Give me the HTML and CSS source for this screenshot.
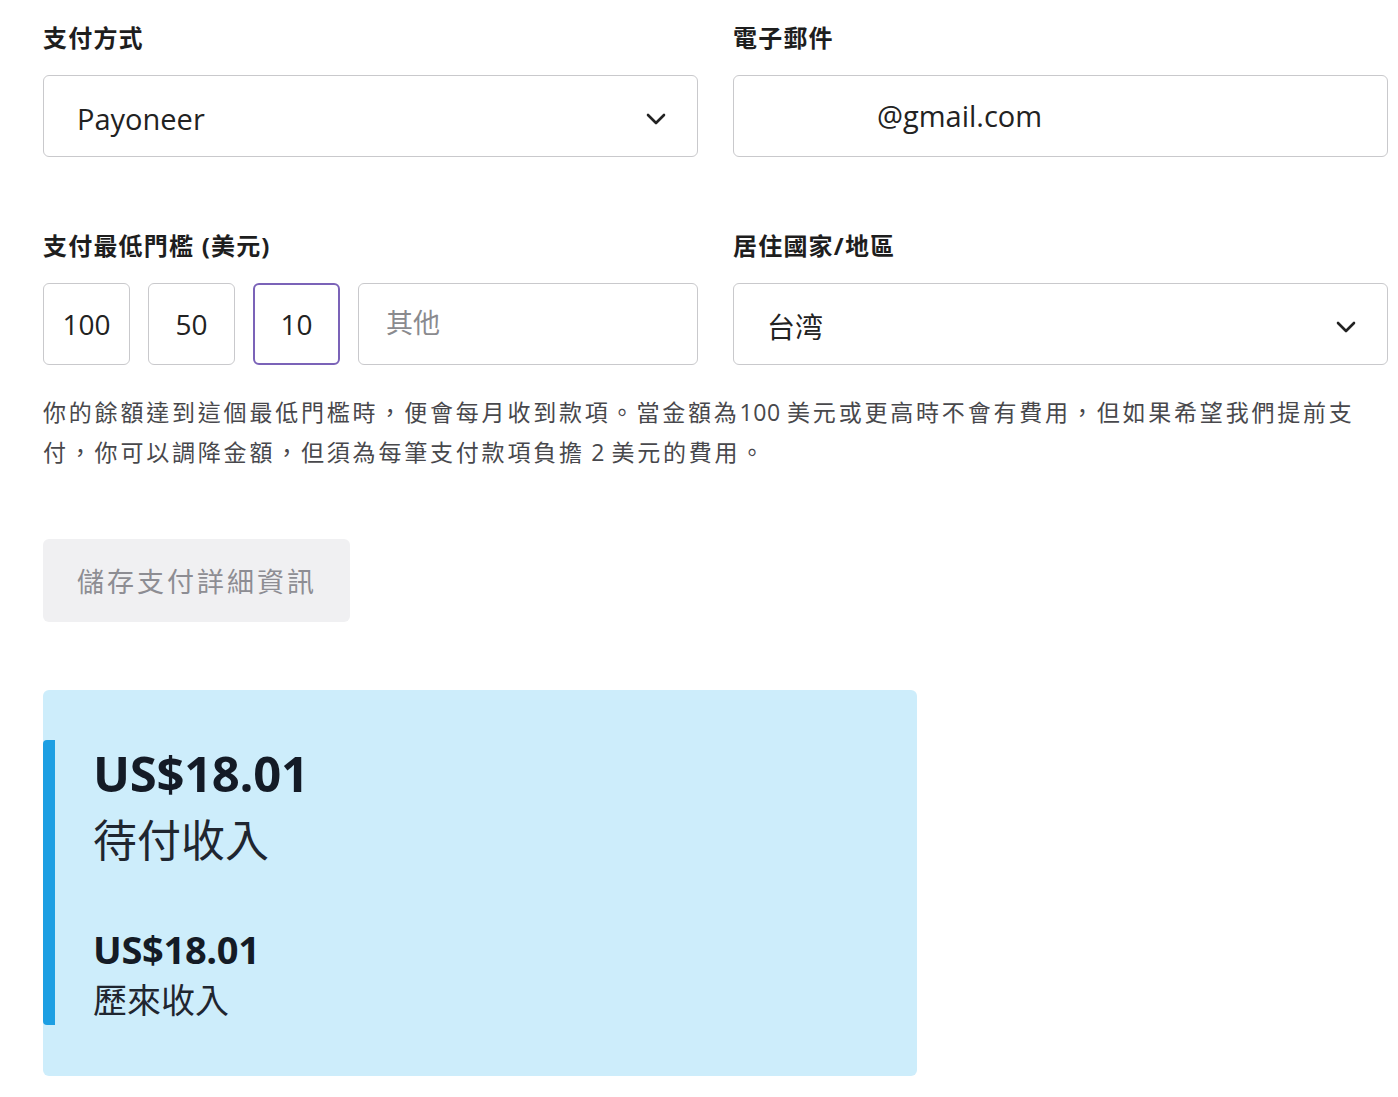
FILE: index.html
```html
<!DOCTYPE html>
<html lang="zh-Hant">
<head>
<meta charset="utf-8">
<title>支付詳細資訊</title>
<link rel="stylesheet" href="styles.css">
</head>
<body>
<div class="page">
  <div class="grid">
    <div class="field">
      <div class="label">支付方式</div>
      <div class="box select">
        <span>Payoneer</span>
        <svg class="chev" width="22" height="14" viewBox="0 0 22 14"><path d="M3 3 L11 11 L19 3" fill="none" stroke="#222" stroke-width="2.6" stroke-linecap="round" stroke-linejoin="round"/></svg>
      </div>
    </div>
    <div class="field">
      <div class="label">電子郵件</div>
      <div class="box email"><span>@gmail.com</span></div>
    </div>

    <div class="field row2">
      <div class="label">支付最低門檻 (美元)</div>
      <div class="amounts">
        <div class="box opt">100</div>
        <div class="box opt">50</div>
        <div class="box opt active">10</div>
        <div class="box other">其他</div>
      </div>
    </div>
    <div class="field row2">
      <div class="label">居住國家/地區</div>
      <div class="box select">
        <span class="cjk">台湾</span>
        <svg class="chev" width="22" height="14" viewBox="0 0 22 14"><path d="M3 3 L11 11 L19 3" fill="none" stroke="#222" stroke-width="2.6" stroke-linecap="round" stroke-linejoin="round"/></svg>
      </div>
    </div>
  </div>

  <p class="help">你的餘額達到這個最低門檻時，便會每月收到款項。當金額為<span class="num">100 </span>美元或更高時不會有費用，但如果希望我們提前支付，你可以調降金額，但須為每筆支付款項負擔<span class="num"> 2 </span>美元的費用。</p>

  <div class="save">儲存支付詳細資訊</div>

  <div class="card">
    <div class="card-inner">
      <div class="big-amt">US$18.01</div>
      <div class="big-lbl">待付收入</div>
      <div class="sm-amt">US$18.01</div>
      <div class="sm-lbl">歷來收入</div>
    </div>
  </div>
</div>
</body>
</html>
```

FILE: styles.css
```css
body{margin:0; background:#fff; color:#222;
font-family:"Open Sans","Noto Sans CJK TC",sans-serif;}
.page{padding:24px 10px 0 43px}

.grid{display:grid; grid-template-columns:655px 655px; column-gap:35px}
.field .label{font-size:24px; line-height:28px; font-weight:700; letter-spacing:1.2px; margin-bottom:23px; color:#1e1e1e}
.row2{margin-top:75px}

.box{box-sizing:border-box; height:82px; border:1.5px solid #c9c9cc; border-radius:6px; background:#fff;
font-size:28px; color:#222; display:flex; align-items:center}
.select{justify-content:space-between; padding:4px 30px 0 33px; font-size:29px}
.select .cjk{font-size:28px}
.chev{display:block; margin-top:2px}
.email{padding-left:143px; padding-bottom:2px; font-size:29px}

.amounts{display:flex; gap:18px}
.opt{width:87px; justify-content:center}
.opt.active{border:2px solid #7b63b8}
.other{flex:1; padding-left:27px; color:#8a8a8e; font-size:27px; padding-bottom:6px}

.help{margin:27px 0 0; width:1325px; font-size:23px; line-height:40px; letter-spacing:2.8px; color:#48484c}
.help .num{letter-spacing:0.5px}

.save{margin-top:67px; width:307px; height:83px; box-sizing:border-box; background:#f0f0f2; border-radius:6px;
display:flex; align-items:center; padding-left:34px; font-size:27px; letter-spacing:3px; color:#8d8d93}

.card{margin-top:68px; width:874px; height:386px; box-sizing:border-box; background:#cdedfb; border-radius:6px; padding-top:50px}
.card-inner{border-left:12px solid #1d9fe3; border-radius:4px 3px 3px 4px; padding:3px 0 5px 38px; width:500px}
.big-amt{font-size:49px; line-height:60px; font-weight:700; color:#141b26; letter-spacing:-0.3px}
.big-lbl{font-size:44px; line-height:56px; margin-top:9px; color:#1f2630}
.sm-amt{font-size:38px; line-height:44px; font-weight:700; margin-top:59px; color:#141b26; letter-spacing:-0.3px}
.sm-lbl{font-size:34px; line-height:40px; margin-top:9px; color:#1f2630}
```
